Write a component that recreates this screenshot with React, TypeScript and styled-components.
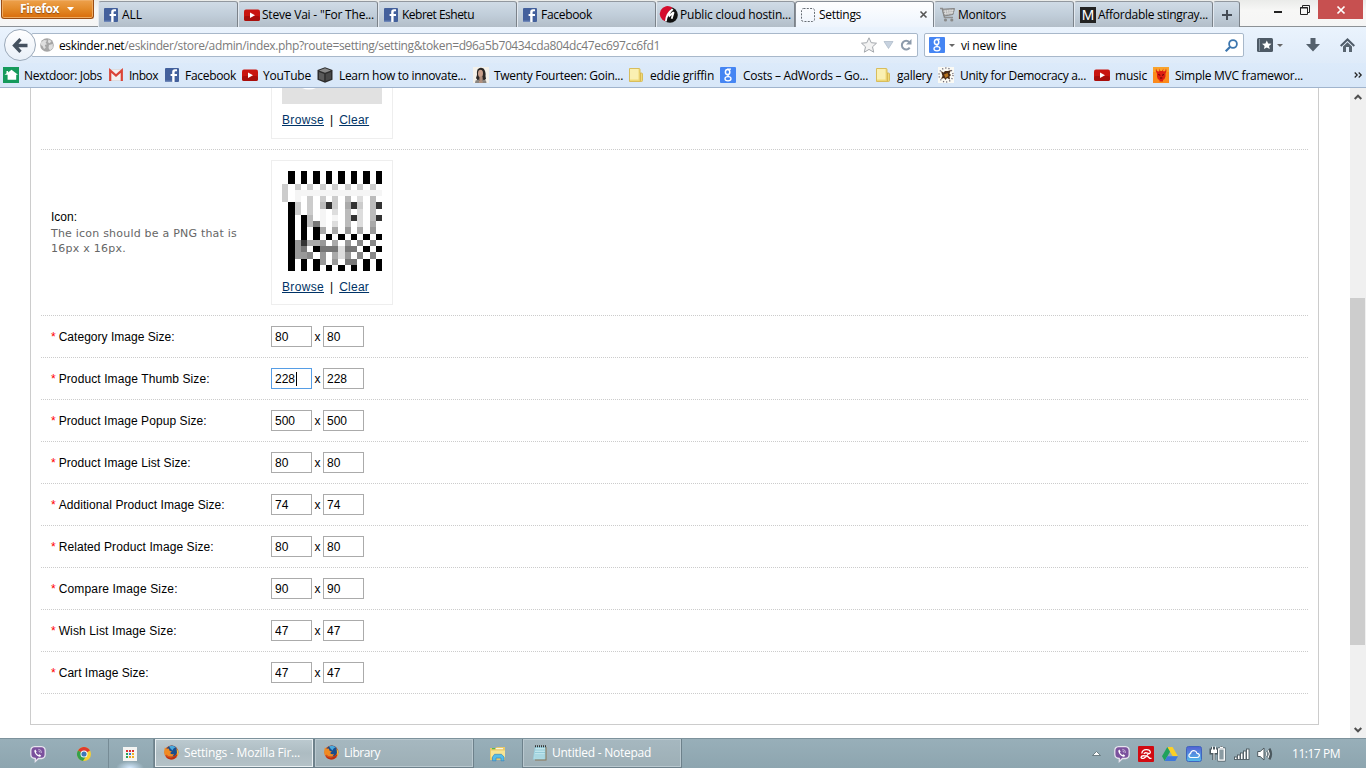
import React, { useLayoutEffect, useRef, useState } from "react";
import styled, { createGlobalStyle, css } from "styled-components";

const GlobalStyle = createGlobalStyle`
  * { box-sizing: border-box; }
  html, body { margin: 0; padding: 0; background: #fff; overflow: hidden; }
  input { font: inherit; }
`;

const Screen = styled.div`
  width: 1366px;
  height: 768px;
  display: flex;
  flex-direction: column;
  overflow: hidden;
  font-family: "Open Sans", "Noto Sans", sans-serif;
  font-size: 12px;
  color: #000;
`;

/* ---------- text that spaces itself to a given width ---------- */

const FitBox = styled.span<{ $w: number }>`
  display: block;
  flex: none;
  width: ${(p) => p.$w}px;
  white-space: nowrap;
`;

function Fit({ w, children }: { w: number; children: React.ReactNode }) {
  const ref = useRef<HTMLSpanElement>(null);
  const [spacing, setSpacing] = useState(0);
  useLayoutEffect(() => {
    const el = ref.current;
    if (!el) return;
    const natural = el.getBoundingClientRect().width;
    const count = (el.textContent || "").length;
    setSpacing((w - natural) / count);
  }, [w]);
  return (
    <FitBox $w={w}>
      <span ref={ref} style={{ letterSpacing: spacing }}>
        {children}
      </span>
    </FitBox>
  );
}

/* ---------- icons ---------- */

const Svg = styled.svg`
  display: block;
  flex: none;
  overflow: visible;
`;

const Glyph = styled.span<{ $bg: string }>`
  display: flex;
  flex: none;
  align-items: center;
  justify-content: center;
  width: 16px;
  height: 16px;
  background: ${(p) => p.$bg};
  color: #fff;
  font-family: "Liberation Sans", sans-serif;
  font-size: 15px;
  line-height: 1;
`;

const Facebook = () => (
  <Svg width="14" height="14" viewBox="0 0 14 14">
    <rect width="14" height="14" rx="1" fill="#43609c" />
    <path d="M12 3.2h-1.3Q9.6 3.2 9.6 4.3V6H12v2H9.6v6H7.200V8H5.600V6h1.600V4Q7.200 1.200 10 1.200h2z" fill="#fff" />
    <rect y="12.6" width="7" height="1.4" fill="#6f88ba" />
  </Svg>
);

const YouTube = () => (
  <Svg width="16" height="16" viewBox="0 0 16 16">
    <rect y="2.5" width="16" height="11.5" rx="2" fill="#c9140f" />
    <rect y="9" width="16" height="5" rx="2" fill="#a80e0b" />
    <path d="M6 5.5l5 2.8-5 2.7z" fill="#fff" />
  </Svg>
);

const GoogleG = () => (
  <Svg width="16" height="16" viewBox="0 0 16 16">
    <rect width="16" height="16" rx="1" fill="#4585f3" />
    <g fill="none" stroke="#fff">
      <ellipse cx="7.6" cy="5" rx="2.2" ry="2.6" strokeWidth="1.5" />
      <path d="M7.2 2.1H11M8.2 7.6q-1 1 .8 1.9" strokeWidth="1.2" />
      <ellipse cx="8" cy="11.7" rx="3" ry="2.1" strokeWidth="1.3" />
    </g>
  </Svg>
);

const Folder = () => (
  <Svg width="14" height="16" viewBox="0 0 14 16">
    <path d="M.5 1.500h9.500q1 0 1 1V6h1.500q1 0 1 1v6.500q0 1-1 1H.5z" fill="#efd978" stroke="#d8bd5c" />
    <path d="M1 2h8.500v10.500H1z" fill="#faf0b2" />
    <path d="M11.300 6v8" stroke="#d3b14a" />
  </Svg>
);

const Nextdoor = () => (
  <Svg width="16" height="16" viewBox="0 0 16 16">
    <rect width="16" height="16" fill="#159a5c" />
    <path d="M8.5 2.8L15 7.8h-1.8v5H4.600v-5H1.500l2-1.500V4h1.600v1.400z" fill="#fff" />
  </Svg>
);

const Gmail = () => (
  <Svg width="14" height="12" viewBox="0 0 14 12">
    <rect x=".5" y=".5" width="13" height="11" rx="1" fill="#f3f1f0" stroke="#d8d2d0" strokeWidth=".6" />
    <path d="M1.200 12V1.400L7 6.600l5.800-5.200V12" fill="none" stroke="#db4437" strokeWidth="2.2" />
  </Svg>
);

const Cube = () => (
  <Svg width="16" height="16" viewBox="0 0 16 16">
    <path d="M8 .3L15.500 3v9.700L8 15.800.5 12.700V3z" fill="#2d2d2d" />
    <path d="M2 3.500l6-2.200 6 2.200-6 2.200z" fill="#888" />
    <path d="M2 5l5.200 2v7L2 12z" fill="#5a5a5a" />
    <path d="M8.700 7L14 5v7l-5.300 2z" fill="#484848" />
  </Svg>
);

const Portrait = () => (
  <Svg width="16" height="16" viewBox="0 0 16 16">
    <rect width="16" height="16" fill="#f4f1ea" />
    <path d="M4.500 2.500Q7-.5 10.500 1.500 13 4 12.500 9l.5 3-3 2H5l-2-3 1-3q-.5-3 .5-5.500z" fill="#2a2624" />
    <ellipse cx="7.500" cy="6.500" rx="2.500" ry="3.700" fill="#c9a08c" />
    <path d="M6.500 9.500h3l.5 6.500H6z" fill="#b08e7c" />
    <path d="M2.500 13.500L6 12.500V16H2zM9.500 12.500l3.500 1 .5 2.500h-4z" fill="#8a8580" />
  </Svg>
);

const Emblem = () => (
  <Svg width="16" height="16" viewBox="0 0 16 16">
    <rect width="16" height="16" fill="#fbfaf4" />
    <circle cx="8" cy="8" r="7" fill="none" stroke="#6b6876" strokeWidth="1.300" strokeDasharray="1.2 2" />
    <path d="M3 4l2.500 1.500L7 4h3l3-1-1.500 3.500L13 8l-1.500 1.500.5 3-3-1.500-1.500 2-1.500-2L3 12l1.500-3z" fill="#4a2c17" />
    <path d="M6 7.500L9.500 6l1 3-3 2z" fill="#b8741f" />
  </Svg>
);

const Demon = () => (
  <Svg width="16" height="16" viewBox="0 0 16 16">
    <rect width="16" height="16" fill="#fb8a1c" />
    <rect width="16" height="5" fill="#f9a32c" />
    <path d="M3 1.500Q3.300 4 5.500 4.500L6.500 4 6 1.500 7.500 4h1.500L10.500 1.500 10 4l1 .5Q12.800 4 13 1.500 14.300 4 12.500 6.500v3Q12 12 10 13v1.500H6.500V13Q4 12 4 9.500v-3Q2 4.500 3 1.500z" fill="#dd1d12" />
    <path d="M5.300 7.500l2 .8M11 7.500l-2 .8M7 11h2.300" stroke="#5e0505" />
  </Svg>
);

const CloudHost = () => (
  <Svg width="16" height="16" viewBox="0 0 16 16">
    <circle cx="8" cy="8" r="7.800" fill="#111" />
    <path d="M10.500.7A7.800 7.800 0 1 0 3.500 14.300Q4 6 10.500.7z" fill="#d50d2d" />
    <path d="M3 14Q3.500 6 10 1.500l1.500 1.200Q9 4.500 8 7l3-2.500 1.500 1-2 6.500-1.700-.5 1-3.500L7 10.500l-.5-2Q5 11 4.700 14.500z" fill="#fff" />
  </Svg>
);

const Dotted = () => (
  <Svg width="14" height="14" viewBox="0 0 14 14">
    <rect x=".5" y=".5" width="13" height="13" rx="2" fill="none" stroke="#666c73" strokeDasharray="2 1.3" />
  </Svg>
);

const Cart = () => (
  <Svg width="15" height="15" viewBox="0 0 15 15">
    <path d="M0 1.500h2.300l2.200 9h8.500" fill="none" stroke="#8f8f8f" strokeWidth="1.500" />
    <path d="M2.500 2.200L14.500 1.500 13 7.500l-9 1.500z" fill="#aaa" stroke="#858585" />
    <path d="M5 3l1 5M7.500 3l.6 4.600M10 2.500V7M12.300 2.500L11.800 7M3.500 4.300L13.500 3.500M4 6.500l9.300-1" stroke="#e8e8e8" strokeWidth=".7" />
    <circle cx="5.500" cy="13" r="1.600" fill="#8a8a8a" />
    <circle cx="11.800" cy="13" r="1.600" fill="#8a8a8a" />
  </Svg>
);

const GlobeIcon = () => (
  <Svg width="14" height="14" viewBox="0 0 14 14">
    <circle cx="7" cy="7" r="6.800" fill="#a6a6a6" />
    <path d="M1 4.500L4 2l3 .4L5.600 4.800 7 6.300 4.800 7l1 2.800L4 11 2.500 8 .8 7zM8.500 1.200l3 1.800-1.700 2.300-2-1zM9 7l3.800-1v4L10 12.500 8.500 10z" fill="#dedede" />
  </Svg>
);

const FirefoxIcon = () => (
  <Svg width="15" height="15" viewBox="0 0 15 15">
    <circle cx="7.500" cy="7.500" r="7" fill="#d9521a" />
    <circle cx="7.800" cy="6" r="5.500" fill="#1a4c8c" />
    <path d="M5 1.300Q9-.3 12 2.500 9.500 2.500 8.500 5.500L6 3z" fill="#4aa8dc" />
    <path d="M.8 2.500L2.500 3.800l2.300-.3.8 2.200 2.300.8-1.800 1.400q1.200 2.100 4 1.100L8.500 11.500Q4 12 2.500 9.500L1 11Q-.5 6.500.8 2.500z" fill="#f08a22" />
    <path d="M12.300 3q2.700 3 2.200 6.500L12 12q1.800-4 .3-9z" fill="#f6bd3a" />
    <path d="M1 10q2.500 3.500 7 2.500 3.500-.8 5.500-4-1 6-6.500 6Q2.500 14 1 10z" fill="#b92f12" />
  </Svg>
);

const ChromeIcon = () => (
  <Svg width="14" height="14" viewBox="0 0 14 14">
    <circle cx="7" cy="7" r="7" fill="#f6cf34" />
    <path d="M7 7L1 3.400A7 7 0 0 1 13 3.500z" fill="#df3a2d" />
    <path d="M7 7L1 3.400A7 7 0 0 0 6 14l3.200-5z" fill="#35a04b" />
    <circle cx="7" cy="7" r="3.500" fill="#fff" />
    <circle cx="7" cy="7" r="2.600" fill="#3f77b8" />
  </Svg>
);

const Viber = () => (
  <Svg width="16" height="16" viewBox="0 0 16 16">
    <path d="M4.500.7h7Q15 1 15.200 4.500v4q-.3 3.700-3.700 4H8.500L5.300 15.500v-3Q1 12.200.8 8.500v-4Q1 1 4.500.7z" fill="#7b519d" stroke="#e6e3ee" strokeWidth="1.300" />
    <path d="M5.300 3.600l1.300 1.800-.7 1.100q.9 1.800 2.500 2.500l1.200-.7 1.600 1.400q-.9 1.600-2.400.9Q5.200 9 4.300 5.200q0-1.100 1-1.600z" fill="#fff" />
    <path d="M8.300 3.300q3.200.2 3.300 3.500M8.500 5q1.500.2 1.600 1.700" fill="none" stroke="#e6dff0" strokeWidth=".7" />
  </Svg>
);

const AppGrid = () => (
  <Svg width="14" height="14" viewBox="0 0 14 14">
    <rect width="14" height="14" fill="#f4f4f2" />
    {["#dd3030", "#dd3030", "#dd3030", "#28a05a", "#3777d8", "#f0b020", "#28a05a", "#f0a020", "#f0b020"].map((c, i) => (
      <rect key={i} x={3 + (i % 3) * 3} y={3 + Math.floor(i / 3) * 3} width="2" height="2" fill={c} />
    ))}
  </Svg>
);

const Explorer = () => (
  <Svg width="16" height="14" viewBox="0 0 16 14">
    <path d="M0 1h5.500L7 0h8v13H0z" fill="#e9ca68" />
    <rect x="1" y="3.500" width="14" height="7" fill="#f7e594" />
    <path d="M2 1.700h3" stroke="#35b548" />
    <path d="M6 1.700h7" stroke="#fff" />
    <path d="M2.500 13.800V10l2-2.700h7L14 10v3.800h-3V11H6v2.800z" fill="#55bde8" stroke="#3a88bd" strokeWidth=".7" />
  </Svg>
);

const NotepadIcon = () => (
  <Svg width="15" height="16" viewBox="0 0 15 16">
    <path d="M3 2h11.500v13.500H3z" fill="#8b7454" />
    <path d="M3 1.500h10.500v13H.8z" fill="#9bd1df" />
    <path d="M3.500 3h9.500l-.5 10.500H2z" fill="#bfe5ec" />
    <path d="M3 5h10M3 7.500h10M2.700 10h10M2.500 12h10" stroke="#78b8cc" strokeWidth=".6" />
    <path d="M3 1.200h11" stroke="#333" strokeWidth="2" strokeDasharray="1 1" />
  </Svg>
);

const Avira = () => (
  <Svg width="16" height="16" viewBox="0 0 16 16">
    <rect width="16" height="16" rx="1" fill="#d20a11" />
    <path d="M3.800 7.500Q4.200 3.700 8.300 3.600 12.300 3.500 12.300 6.500 12 8.300 9.500 7.200 6.500 6 6 8M10.500 7.500q-2 3.500-4.500 4.600-2.500.8-3-.8.300-1.800 3.500-1.500l2.700.2 2.500 2.300h1.800" fill="none" stroke="#fff" strokeWidth="1.300" />
  </Svg>
);

const Drive = () => (
  <Svg width="16" height="14" viewBox="0 0 16 14">
    <path d="M5.300 0h5.300L16 9.300h-5.300z" fill="#fbcf27" />
    <path d="M5.300 0L8 4.700 2.700 14 0 9.300z" fill="#20a25c" />
    <path d="M5.300 9.300H16L13.300 14H2.700z" fill="#3f78dc" />
  </Svg>
);

const ICloud = () => (
  <Svg width="16" height="16" viewBox="0 0 16 16">
    <defs>
      <linearGradient id="ic" x2="0" y2="1">
        <stop offset="0" stopColor="#5460d3" />
        <stop offset="1" stopColor="#55bdec" />
      </linearGradient>
    </defs>
    <rect x=".5" y=".5" width="15" height="15" rx="2" fill="url(#ic)" stroke="#3f65bd" />
    <path d="M4.800 11.500Q2.500 11 3 9q.3-1 1.500-1.300Q5 4.600 8 4.700q2.400.2 3 2.600 2.500.3 2.400 2.300-.4 1.900-2.200 1.900z" fill="none" stroke="#fff" strokeWidth="1.200" />
  </Svg>
);

const Power = () => (
  <Svg width="16" height="16" viewBox="0 0 16 16">
    <g fill="none" stroke="#4c595f" strokeWidth="3">
      <path d="M2.500 1v3M5 1v3M1 4h5.500v3H1zM3.800 7v7" />
      <path d="M9 3h5v11H9zM10.500 1.500h2" />
    </g>
    <path d="M2 .5h1v3h2v-3h1v3h1V7H4.500v7h-1V7H1V3.500h1z" fill="#fff" />
    <path d="M8.700 2.800h5.600v11.400H8.700zM10 1.400h3" fill="#8a9ba2" stroke="#fff" strokeWidth="1.300" />
  </Svg>
);

const Signal = () => (
  <Svg width="15" height="12" viewBox="0 0 15 12">
    {[0, 1, 2, 3, 4].map((i) => (
      <rect key={i} x={0.5 + i * 3} y={9 - i * 2} width="2.500" height={2.5 + i * 2} fill="#fff" stroke="#4c595f" strokeWidth=".9" />
    ))}
  </Svg>
);

const Speaker = () => (
  <Svg width="15" height="14" viewBox="0 0 15 14">
    <path d="M9 4.500q1.500 2.500 0 5M11 2.800q2.700 4.200 0 8.400M12.500 1.500q3.300 5.500 0 11" fill="none" stroke="#4c595f" strokeWidth="2" />
    <path d="M9 4.500q1.500 2.500 0 5M11 2.800q2.700 4.200 0 8.400" fill="none" stroke="#fff" />
    <path d="M.7 4.500h2.500L7 1v12L3.200 9.500H.7z" fill="#fff" stroke="#4c595f" />
  </Svg>
);

/* ---------- title bar and tabs ---------- */

const TitleBar = styled.div`
  height: 27px;
  flex: none;
  display: flex;
  background: linear-gradient(#eaebe9, #f7f7f6 40%, #f5f5f5);
  border-bottom: 1px solid #8c9196;
`;

const FirefoxButton = styled.div`
  width: 93px;
  height: 19px;
  margin: 0 4px 0 1px;
  padding: 0 0 1px 18px;
  display: flex;
  align-items: center;
  gap: 8px;
  border: 1px solid #994d15;
  border-top: 0;
  border-radius: 0 0 3px 3px;
  background: linear-gradient(#eda14c, #e38a29 50%, #d96c0a);
  box-shadow: inset 0 0 0 1px #efac62;
  color: #fff;
  font-weight: 700;
  text-shadow: 0 1px 1px #8a4b15;
`;

const Tab = styled.div<{ $active?: boolean; $w: number }>`
  width: ${(p) => p.$w}px;
  height: 26px;
  margin-top: 1px;
  padding: 0 6px 0 5px;
  display: flex;
  align-items: center;
  border: 1px solid #92989f;
  border-left-color: #e3e9f0;
  border-right-color: #7b828a;
  border-bottom: 0;
  border-radius: 3px 3px 0 0;
  background: linear-gradient(#d0dbe6, #c1ceda 50%, #b3bec9);
  ${(p) =>
    p.$active &&
    css`
      height: 27px;
      background: linear-gradient(#fefefe, #edf4fd);
      border-color: #898f97;
      border-right-color: #7b828a;
      padding-bottom: 1px;
    `}
`;

const TabIcon = styled.span`
  width: 18px;
  flex: none;
`;

const Tabs = styled.div`
  display: flex;
  height: 27px;
`;

const TabClose = styled.span`
  margin-left: auto;
  display: flex;
`;

const WindowButtons = styled.div`
  display: flex;
  margin-left: auto;
  height: 19px;
  align-items: stretch;
`;

const WindowButton = styled.div<{ $close?: boolean; $w: number }>`
  width: ${(p) => p.$w}px;
  display: flex;
  align-items: center;
  justify-content: center;
  background: ${(p) => (p.$close ? "#c75050" : "transparent")};
`;

/* ---------- navigation ---------- */

const NavBar = styled.div`
  height: 36px;
  flex: none;
  display: flex;
  align-items: center;
  padding-left: 4px;
  background: linear-gradient(#eaf3fd, #dfebf9);
`;

const BackButton = styled.div`
  width: 32px;
  height: 32px;
  flex: none;
  display: flex;
  align-items: center;
  justify-content: center;
  border: 1px solid #9ba9b9;
  border-radius: 50%;
  background: linear-gradient(#fff, #e9f0f8);
  z-index: 1;
`;

const Field = styled.div<{ $w: number }>`
  width: ${(p) => p.$w}px;
  height: 24px;
  flex: none;
  display: flex;
  align-items: center;
  border: 1px solid #a8b8ca;
  border-radius: 2px;
  background: #fff;
`;

const AddressField = styled(Field)`
  margin: 0 6px 0 -5px;
  padding-left: 8px;
  color: #7b7b7b;
  gap: 5px;
  b { font-weight: 400; color: #000; }
`;

const SearchField = styled(Field)`
  padding: 0 5px 0 4px;
  svg:last-child { margin-left: auto; }
`;

const FieldTools = styled.div`
  display: flex;
  align-items: center;
  gap: 6px;
  margin-left: auto;
  padding-right: 5px;
`;

const Caret = styled.span`
  margin: 0 6px 0 4px;
  border: 3px solid transparent;
  border-top-color: #666;
  border-bottom: 0;
`;

const NavTools = styled.div`
  display: flex;
  align-items: center;
  padding-left: 13px;
`;

const DownloadIcon = styled(Svg)`
  margin: 0 20px 0 17px;
`;

const BookmarksBar = styled.div`
  height: 25px;
  flex: none;
  display: flex;
  align-items: center;
  padding-left: 3px;
  background: linear-gradient(#dceafa, #d8e7f8);
  border-bottom: 1px solid #a0b4cd;
`;

const Bookmark = styled.div<{ $w: number }>`
  width: ${(p) => p.$w}px;
  flex: none;
  display: flex;
  align-items: center;
`;

const BookmarkIcon = styled.span<{ $w: number }>`
  width: ${(p) => p.$w}px;
  flex: none;
`;

const Chevrons = styled(Svg)`
  margin-left: 3px;
`;

const bookmarks: [React.ReactNode, string, number, number, number][] = [
  [<Nextdoor />, "Nextdoor: Jobs", 21, 78, 106],
  [<Gmail />, "Inbox", 20, 29, 56],
  [<Facebook />, "Facebook", 20, 51, 77],
  [<YouTube />, "YouTube", 21, 48, 75],
  [<Cube />, "Learn how to innovate...", 22, 127, 156],
  [<Portrait />, "Twenty Fourteen: Goin...", 21, 129, 156],
  [<Folder />, "eddie griffin", 21, 64, 91],
  [<GoogleG />, "Costs – AdWords – Go...", 23, 125, 156],
  [<Folder />, "gallery", 21, 35, 62],
  [<Emblem />, "Unity for Democracy a...", 22, 126, 156],
  [<YouTube />, "music", 21, 32, 59],
  [<Demon />, "Simple MVC framewor...", 22, 128, 198],
];

const tabs: { icon: React.ReactNode; label: string; text: number; w: number; active?: boolean }[] = [
  { icon: <Facebook />, label: "ALL", text: 20, w: 140 },
  { icon: <YouTube />, label: 'Steve Vai - "For The...', text: 112, w: 140 },
  { icon: <Facebook />, label: "Kebret Eshetu", text: 72, w: 139 },
  { icon: <Facebook />, label: "Facebook", text: 51, w: 139 },
  { icon: <CloudHost />, label: "Public cloud hostin...", text: 111, w: 139 },
  { icon: <Dotted />, label: "Settings", text: 42, w: 139, active: true },
  { icon: <Cart />, label: "Monitors", text: 48, w: 140 },
  { icon: <Glyph $bg="#222">M</Glyph>, label: "Affordable stingray...", text: 110, w: 139 },
];

/* ---------- page ---------- */

const Page = styled.div`
  height: 650px;
  flex: none;
  display: flex;
  background: #fff;
`;

const PageBody = styled.div`
  flex: 1;
  padding: 0 31px 0 30px;
  font-family: "Liberation Sans", Arial, sans-serif;
`;

const Panel = styled.div`
  height: 637px;
  padding: 0 10px;
  border: 1px solid #ccc;
  border-top: 0;
`;

const FormRow = styled.div<{ $h: number }>`
  height: ${(p) => p.$h}px;
  padding: 0 10px;
  display: flex;
  align-items: center;
  border-bottom: 1px dotted #ccc;
`;

const FormLabel = styled.div`
  width: 220px;
  flex: none;
  line-height: 15px;
`;

const Required = styled.span`
  color: #f00;
`;

const Help = styled.div`
  padding-top: 1px;
  font-family: "DejaVu Sans", Verdana, sans-serif;
  font-size: 11px;
  line-height: 15px;
  color: #666;
`;

const ImageBox = styled.div<{ $cut?: boolean }>`
  width: 122px;
  height: ${(p) => (p.$cut ? 51 : 145)}px;
  padding: ${(p) => (p.$cut ? 0 : 10)}px 10px 10px;
  align-self: ${(p) => (p.$cut ? "flex-start" : "center")};
  border: 1px solid #eee;
  ${(p) => p.$cut && "border-top: 0;"}
`;

const GreyImage = styled.div`
  height: 16px;
  background: #e1e1e1;
  svg { margin-left: 20px; }
`;

const ImageLinks = styled.div`
  display: flex;
  gap: 6px;
  padding-top: 9px;
  line-height: 14px;
  a { color: #003366; text-decoration: underline; }
`;

const SizeInput = styled.input<{ $focus?: boolean }>`
  width: 41px;
  height: 21px;
  padding: 1px 3px;
  border: 1px solid ${(p) => (p.$focus ? "#569de5" : "#ababab")};
  border-radius: 0;
  outline: 0;
  background: #fff;
`;

const InputWrap = styled.div`
  position: relative;
  display: flex;
`;

const TextCursor = styled.span`
  position: absolute;
  left: 25px;
  top: 4px;
  width: 1px;
  height: 14px;
  background: #000;
`;

const Times = styled.span`
  width: 11px;
  text-align: center;
`;

const pixelRows = [
  "f0f0f0f0f0f0f0f0",
  "f0f0f0f0f0f0f0f0",
  "cfcfcfcfcfcfcfcf",
  "cfeeeeeeeeeeeeee",
  "cfefcfcfcfbfdfbf",
  "f0cfcfb3cfa3cfb3",
  "f0cfcfefdfbfdfbf",
  "f0f0bfefefb3dfb3",
  "f0f0b7efdfbfdfaf",
  "f0f0f0afaf9faf9f",
  "f0f0f0f0f0f0f0f0",
  "f093aa9faf9f8f8f",
  "f097f0777d77f0f0",
  "f0998f9fad9f8f8f",
  "f0f0f09f9f77f0f0",
  "f0f0f0f0f0f0f0f0",
];

const FaviconPreview = () => (
  <Svg width="100" height="100" viewBox="0 0 16 16" shapeRendering="crispEdges">
    {pixelRows.flatMap((row, y) =>
      row.split("").map((c, x) => (
        <rect key={`${x}-${y}`} x={x} y={y} width="1" height="1" fill={c === "e" ? "#f5f5f5" : `#${c}${c}${c}`} />
      ))
    )}
  </Svg>
);

const Links = () => (
  <ImageLinks>
    <a><Fit w={42}>Browse</Fit></a>
    <span>|</span>
    <a><Fit w={30}>Clear</Fit></a>
  </ImageLinks>
);

const sizes: [string, number, number][] = [
  ["Category Image Size:", 80, 116],
  ["Product Image Thumb Size:", 228, 151],
  ["Product Image Popup Size:", 500, 148],
  ["Product Image List Size:", 80, 132],
  ["Additional Product Image Size:", 74, 166],
  ["Related Product Image Size:", 80, 155],
  ["Compare Image Size:", 90, 119],
  ["Wish List Image Size:", 47, 118],
  ["Cart Image Size:", 47, 90],
];

const SizeLabel = styled(FormLabel)`
  display: flex;
  gap: 3px;
  padding-top: 2px;
`;

const ScrollBar = styled.div`
  width: 16px;
  flex: none;
  display: flex;
  flex-direction: column;
  align-items: center;
  padding: 6px 1px 5px 0;
  background: #f0f0f0;
  svg:last-child { margin-top: auto; }
`;

const ScrollThumb = styled.div`
  width: 15px;
  height: 347px;
  flex: none;
  margin-top: 198px;
  background: #cdcdcd;
`;

/* ---------- taskbar ---------- */

const TaskBar = styled.div`
  height: 30px;
  flex: none;
  display: flex;
  align-items: center;
  background: linear-gradient(#98afb9, #8da5af);
  border-top: 1px solid #7d929c;
  color: #fff;
`;

const Pinned = styled.div<{ $w: number; $left: number; $glow?: boolean }>`
  width: ${(p) => p.$w}px;
  height: 29px;
  padding-left: ${(p) => p.$left}px;
  flex: none;
  display: flex;
  align-items: center;
  ${(p) =>
    p.$glow &&
    css`
      border-left: 1px solid #768b95;
      border-right: 1px solid #768b95;
      background: radial-gradient(ellipse 14px 7px at 21px 100%, #d5eaff, transparent);
    `}
`;

const TaskButton = styled.div<{ $active?: boolean; $w: number }>`
  width: ${(p) => p.$w}px;
  height: 29px;
  padding: 0 0 1px 9px;
  flex: none;
  display: flex;
  align-items: center;
  gap: 5px;
  border: 1px solid #6d818b;
  border-top: 0;
  box-shadow: inset 0 0 0 1px ${(p) => (p.$active ? "#e9f0f3" : "#b9c8cf")};
  background: ${(p) => (p.$active ? "linear-gradient(#bccad0, #adbcc2 50%, #b5c3c8)" : "linear-gradient(#a6b8c0, #9dafb6)")};
`;

const Tray = styled.div`
  display: flex;
  align-items: center;
  gap: 8px;
  margin-left: auto;
  padding-right: 26px;
`;

const TrayArrow = styled(Svg)`
  margin-right: 5px;
`;

const Clock = styled.div`
  margin-left: 12px;
`;

export default function App() {
  return (
    <Screen>
      <GlobalStyle />
      <TitleBar>
        <FirefoxButton>
          <Fit w={39}>Firefox</Fit>
          <Svg width="7" height="4" viewBox="0 0 7 4"><path d="M0 0h7L3.500 4z" fill="#fff" /></Svg>
        </FirefoxButton>
        <Tabs>
          {tabs.map((t) => (
            <Tab key={t.label} $w={t.w} $active={t.active}>
              <TabIcon>{t.icon}</TabIcon>
              <Fit w={t.text}>{t.label}</Fit>
              {t.active && (
                <TabClose>
                  <Svg width="7" height="7" viewBox="0 0 7 7"><path d="M.5.500l6 6M6.500.500l-6 6" stroke="#555" strokeWidth="1.600" /></Svg>
                </TabClose>
              )}
            </Tab>
          ))}
          <Tab $w={27}>
            <Svg width="16" height="10" viewBox="0 0 16 10"><path d="M3 5h10M8 0v10" stroke="#454c55" strokeWidth="2" /></Svg>
          </Tab>
        </Tabs>
        <WindowButtons>
          <WindowButton $w={26}>
            <Svg width="8" height="6" viewBox="0 0 8 6"><path d="M0 5h8" stroke="#222" strokeWidth="2" /></Svg>
          </WindowButton>
          <WindowButton $w={27}>
            <Svg width="10" height="10" viewBox="0 0 10 10"><path d="M.5 2.500h7v7h-7zM2.500 2V.500h7v7H8" fill="none" stroke="#222" /><path d="M0 3h8" stroke="#222" /></Svg>
          </WindowButton>
          <WindowButton $close $w={45}>
            <Svg width="8" height="8" viewBox="0 0 8 8"><path d="M.5.500l7 7M7.500.500l-7 7" stroke="#fff" strokeWidth="1.700" /></Svg>
          </WindowButton>
          <WindowButton $w={3} />
        </WindowButtons>
      </TitleBar>

      <NavBar>
        <BackButton>
          <Svg width="16" height="15" viewBox="0 0 16 15"><path d="M8.500 1.200L2.500 7.500l6 6.300M3 7.500h12.500" fill="none" stroke="#45515f" strokeWidth="3.300" /></Svg>
        </BackButton>
        <AddressField $w={887}>
          <GlobeIcon />
          <Fit w={601}><b>eskinder.net</b>/eskinder/store/admin/index.php?route=setting/setting&amp;token=d96a5b70434cda804dc47ec697cc6fd1</Fit>
          <FieldTools>
            <Svg width="16" height="16" viewBox="0 0 16 16"><path d="M8 .8l2.200 4.900 5.300.5-4 3.600 1.200 5.400L8 12.400l-4.700 2.800 1.200-5.400-4-3.600 5.300-.5z" fill="#f3f3f3" stroke="#a4a8ad" /></Svg>
            <Svg width="11" height="8" viewBox="0 0 11 8"><path d="M1 .5h9L5.500 7.500z" fill="#c7d2df" stroke="#a9b7c6" strokeWidth=".7" /></Svg>
            <Svg width="12" height="12" viewBox="0 0 12 12"><path d="M9.300 3.200A4.300 4.300 0 1 0 9.700 8.600" fill="none" stroke="#8d9bab" strokeWidth="2" /><path d="M11.500 0v5.500H6z" fill="#8d9bab" /></Svg>
          </FieldTools>
        </AddressField>
        <SearchField $w={320}>
          <GoogleG />
          <Caret />
          <Fit w={56}>vi new line</Fit>
          <Svg width="13" height="13" viewBox="0 0 13 13"><circle cx="8" cy="5" r="3.900" fill="none" stroke="#3c76ae" strokeWidth="1.800" /><path d="M5 8l-4.300 4.300" stroke="#3c76ae" strokeWidth="2.200" /></Svg>
        </SearchField>
        <NavTools>
          <Svg width="16" height="14" viewBox="0 0 16 14"><rect width="16" height="14" rx="1.500" fill="#4e5a66" /><path d="M2.500 1v12" stroke="#8794a0" /><path d="M9.800 2.500l1.400 3 3.300.3-2.500 2.100.8 3.200-3-1.700-2.900 1.700.7-3.200L5 5.800l3.400-.3z" fill="#fff" /></Svg>
          <Caret />
          <DownloadIcon width="14" height="14" viewBox="0 0 14 14"><path d="M4.500 0h5v6H14l-7 7.500L0 6h4.500z" fill="#55616d" /></DownloadIcon>
          <Svg width="15" height="14" viewBox="0 0 15 14"><path d="M.7 8L7.500 1.500 14.300 8" fill="none" stroke="#4f5b68" strokeWidth="2" /><path d="M3 8.500l4.500-4.300L12 8.500V14H9V9H6v5H3z" fill="#596570" /></Svg>
        </NavTools>
      </NavBar>

      <BookmarksBar>
        {bookmarks.map(([icon, label, iconW, textW, w], i) => (
          <Bookmark key={i} $w={w}>
            <BookmarkIcon $w={iconW}>{icon}</BookmarkIcon>
            <Fit w={textW}>{label}</Fit>
          </Bookmark>
        ))}
        <Chevrons width="8" height="6" viewBox="0 0 8 6"><path d="M.7.500L3.200 3 .7 5.500M4.700.500L7.200 3 4.700 5.500" fill="none" stroke="#222" strokeWidth="1.200" /></Chevrons>
      </BookmarksBar>

      <Page>
        <PageBody>
          <Panel>
            <FormRow $h={62}>
              <FormLabel />
              <ImageBox $cut>
                <GreyImage><Svg width="14" height="2" viewBox="0 0 14 2"><path d="M0 0Q7 3 14 0z" fill="#fff" /></Svg></GreyImage>
                <Links />
              </ImageBox>
            </FormRow>
            <FormRow $h={166}>
              <FormLabel>
                <Fit w={26}>Icon:</Fit>
                <Help>
                  <Fit w={186}>The icon should be a PNG that is</Fit>
                  <Fit w={75}>16px x 16px.</Fit>
                </Help>
              </FormLabel>
              <ImageBox>
                <FaviconPreview />
                <Links />
              </ImageBox>
            </FormRow>
            {sizes.map(([label, value, w], i) => (
              <FormRow key={label} $h={42}>
                <SizeLabel><Required>*</Required><Fit w={w}>{label}</Fit></SizeLabel>
                <InputWrap>
                  <SizeInput $focus={i === 1} defaultValue={value} />
                  {i === 1 && <TextCursor />}
                </InputWrap>
                <Times>x</Times>
                <SizeInput defaultValue={value} />
              </FormRow>
            ))}
          </Panel>
        </PageBody>
        <ScrollBar>
          <Svg width="8" height="6" viewBox="0 0 8 6"><path d="M.7 5L4 1.700 7.300 5" fill="none" stroke="#505050" strokeWidth="2" /></Svg>
          <ScrollThumb />
          <Svg width="8" height="6" viewBox="0 0 8 6"><path d="M.7 1L4 4.300 7.300 1" fill="none" stroke="#505050" strokeWidth="2" /></Svg>
        </ScrollBar>
      </Page>

      <TaskBar>
        <Pinned $w={77} $left={30}><Viber /></Pinned>
        <Pinned $w={31} $left={0}><ChromeIcon /></Pinned>
        <Pinned $w={46} $left={14} $glow><AppGrid /></Pinned>
        <TaskButton $active $w={160}><FirefoxIcon /><Fit w={116}>Settings - Mozilla Fir...</Fit></TaskButton>
        <TaskButton $w={160}><FirefoxIcon /><Fit w={36}>Library</Fit></TaskButton>
        <Pinned $w={48} $left={16}><Explorer /></Pinned>
        <TaskButton $w={160}><NotepadIcon /><Fit w={99}>Untitled - Notepad</Fit></TaskButton>
        <Tray>
          <TrayArrow width="9" height="6" viewBox="0 0 9 6"><path d="M.5 4.500L4.500.500l4 4z" fill="#fff" stroke="#576970" strokeWidth=".8" /></TrayArrow>
          <Viber />
          <Avira />
          <Drive />
          <ICloud />
          <Power />
          <Signal />
          <Speaker />
          <Clock><Fit w={48}>11:17 PM</Fit></Clock>
        </Tray>
      </TaskBar>
    </Screen>
  );
}
